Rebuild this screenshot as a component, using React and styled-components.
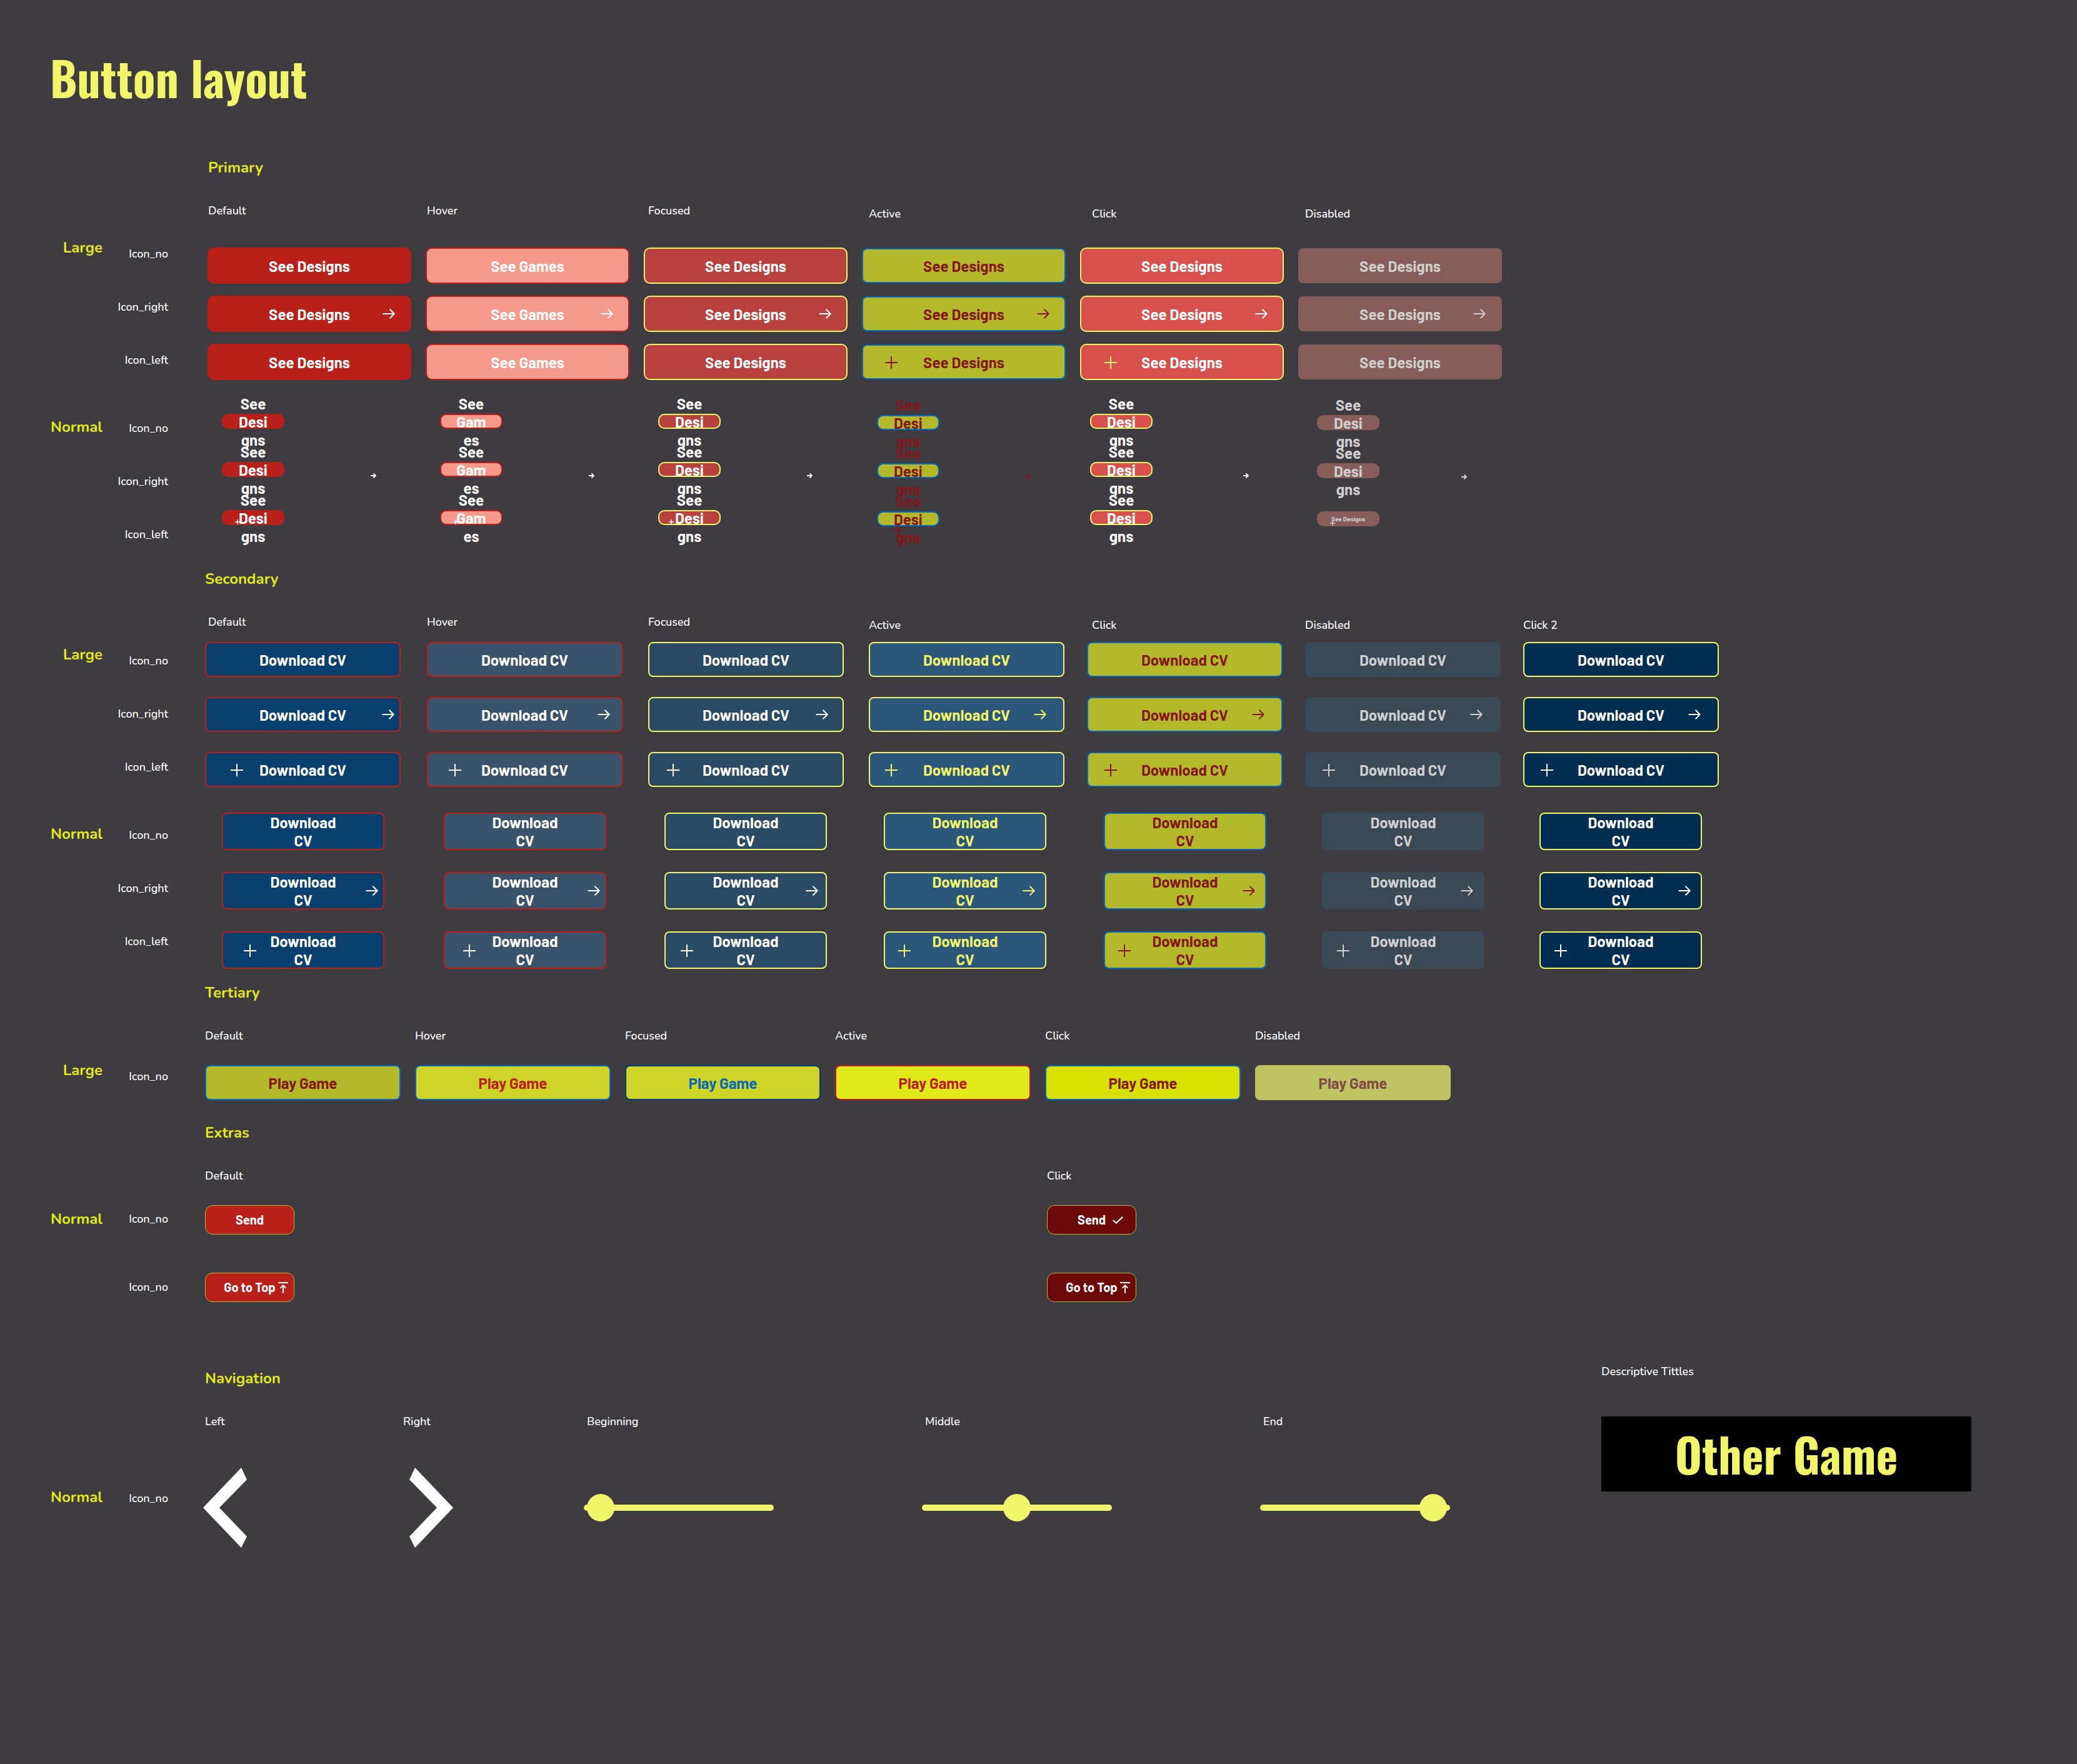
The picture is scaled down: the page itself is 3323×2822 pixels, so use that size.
import React from "react";
import styled, { createGlobalStyle } from "styled-components";

const DISPLAY = `"Oswald", "Liberation Sans Narrow", "Roboto Condensed", sans-serif`;
const LABEL = `"Nunito", "Open Sans", "Noto Sans", sans-serif`;
const ACTION = `"Barlow", Roboto, "Liberation Sans", sans-serif`;

const c = {
  page: "#3f3c41",
  lemon: "#f0f56a",
  lime: "#e2e91a",
  white: "#ffffff",
  red: "#b82019",
  wine: "#841818",
  blue: "#0668b7",
  olive: "#b4b92b",
  muted: "#cfcfcf",
};

const GlobalStyle = createGlobalStyle`
  *, *::before, *::after { box-sizing: border-box; }
  body { margin: 0; background: ${c.page}; }
  h1, h2, h3, p { margin: 0; font-weight: inherit; }
`;

/* ---------- page frame ---------- */

const Page = styled.main`
  min-height: 100vh;
  padding: 74px 0 160px;
  background: ${c.page};
  color: ${c.white};
  font-family: ${LABEL};
`;

const Title = styled.h1`
  padding-left: 80px;
  color: ${c.lemon};
  font: 700 74px/100px ${DISPLAY};
`;

const Section = styled.section`
  padding-top: ${(p) => p.$space}px;
`;

const SectionTitle = styled.h2`
  padding-left: ${(p) => p.$indent || 328}px;
  color: ${c.lime};
  font: 700 24px/32px ${LABEL};
`;

const ColumnLabels = styled.div`
  display: grid;
  grid-template-columns: ${(p) => p.$cols};
  align-items: start;
  margin: 41px 0 ${(p) => p.$after}px;
  padding-left: ${(p) => p.$indent || 328}px;
`;

const ColumnLabel = styled.label`
  padding-top: ${(p) => (p.$low ? 5 : 0)}px;
  font: 500 18px/24px ${LABEL};
`;

const Group = styled.div`
  display: grid;
  grid-template-columns: 164px 105px 1fr;
  align-items: start;
  margin-top: ${(p) => p.$space || 0}px;
`;

const GroupLabel = styled.h3`
  padding-top: ${(p) => p.$top}px;
  text-align: right;
  color: ${c.lime};
  font: 700 24px/32px ${LABEL};
`;

const RowLabels = styled.div`
  display: flex;
  flex-direction: column;
  gap: ${(p) => p.$gap || 61}px;
  padding-top: ${(p) => p.$top}px;
  text-align: right;
  font: 500 18px/24px ${LABEL};
`;

const Matrix = styled.div`
  display: grid;
  grid-template-columns: ${(p) => p.$cols};
  row-gap: ${(p) => p.$gap || 0}px;
  align-items: ${(p) => p.$align || "center"};
  padding: ${(p) => p.$top || 0}px 0 0 ${(p) => p.$indent || 59}px;
`;

const PillCell = styled.div`
  display: flex;
  align-items: flex-start;
  justify-content: space-between;
  width: 270px;
  padding: ${(p) => p.$drop || 0}px 0 0 ${(p) => p.$indent}px;
`;

/* ---------- buttons ---------- */

const sizes = {
  primary: { w: 326, h: 58, r: 10, f: 24 },
  pill: { w: 100, h: 24, r: 10, f: 24 },
  large: { w: 313, h: 56, r: 8, f: 24 },
  normal: { w: 260, h: 60, r: 8, f: 24 },
  extra: { w: 143, h: 47, r: 12, f: 20 },
};

const ActionButton = styled.button`
  position: relative;
  display: grid;
  grid-template-columns: 1fr auto 1fr;
  align-items: center;
  align-content: center;
  flex: none;
  width: ${(p) => sizes[p.$size].w}px;
  height: ${(p) => sizes[p.$size].h - (p.$slim ? 2 : 0)}px;
  padding: 0;
  border: ${(p) => (p.$size === "extra" ? 1 : 2)}px solid ${(p) => p.$tone.line || p.$tone.fill};
  border-radius: ${(p) => sizes[p.$size].r - (p.$slim ? 2 : 0)}px;
  background: ${(p) => p.$tone.fill};
  color: ${(p) => p.$tone.ink};
  font: 700 ${(p) => sizes[p.$size].f}px/29px ${ACTION};
`;

const Caption = styled.span`
  grid-column: 2;
  text-align: center;
  white-space: nowrap;
`;

const TinyCaption = styled(Caption)`
  font-size: 10px;
`;

const LeftSlot = styled.span`
  grid-area: 1 / 1;
  display: flex;
  padding: 2px 0 0 ${(p) => p.$inset - 2}px;
  color: ${(p) => p.$ink || "inherit"};
`;

const RightSlot = styled.span`
  grid-area: 1 / 3;
  justify-self: end;
  display: flex;
  padding-right: ${(p) => p.$inset - 2}px;
`;

const PinnedMark = styled.span`
  position: absolute;
  left: ${(p) => p.$x}px;
  top: ${(p) => p.$y}px;
  display: flex;
`;

const TrailingMark = styled.span`
  display: flex;
  flex: none;
  margin: 18px 0 -2px;
  color: ${(p) => p.$ink};
`;

/* ---------- icons ---------- */

const Arrow = () => (
  <svg width="20" height="16" viewBox="0 0 20 16" fill="none" stroke="currentColor" strokeWidth="2" aria-hidden="true">
    <path d="M0.5 8H18.5M11.6 0.8L18.7 8L11.6 15.2" />
  </svg>
);

const TinyArrow = () => (
  <svg width="9" height="8" viewBox="0 0 9 8" fill="none" stroke="currentColor" strokeWidth="2" aria-hidden="true">
    <path d="M0 4H7.6M4.4 0.6L7.8 4L4.4 7.4" />
  </svg>
);

const Plus = ({ size = 20 }) => (
  <svg width={size} height={size} viewBox={`0 0 ${size} ${size}`} stroke="currentColor" strokeWidth={size > 10 ? 2 : 1.5} aria-hidden="true">
    <path d={`M0 ${size / 2}H${size}M${size / 2} 0V${size}`} />
  </svg>
);

const Check = () => (
  <svg width="17" height="12" viewBox="0 0 17 12" fill="none" stroke="currentColor" strokeWidth="2" aria-hidden="true">
    <path d="M0.8 6L5.8 10.6L16.2 0.8" />
  </svg>
);

const ToTop = () => (
  <svg width="16" height="18" viewBox="0 0 16 18" fill="none" stroke="currentColor" strokeWidth="2" aria-hidden="true">
    <path d="M0 1H16M8 18V5.4M3.6 9.6L8 5.2L12.4 9.6" />
  </svg>
);

/* ---------- navigation ---------- */

const ArrowButton = styled.button`
  display: flex;
  justify-self: start;
  padding: 0;
  border: 0;
  background: none;
  color: ${c.white};
`;

const Chevron = ({ flip }) => (
  <svg width="70" height="128" viewBox="0 0 70 128" fill="currentColor" aria-hidden="true">
    <path d={flip ? "M9 0L70 64L9 128L0 110L44 64L0 19Z" : "M61 0L0 64L61 128L70 110L26 64L70 19Z"} />
  </svg>
);

const Slider = styled.input`
  appearance: none;
  width: 304px;
  height: 44px;
  margin: 0;
  background: none;

  &::-webkit-slider-runnable-track {
    height: 10px;
    border-radius: 5px;
    background: ${c.lemon};
  }

  &::-webkit-slider-thumb {
    appearance: none;
    width: 44px;
    height: 44px;
    margin-top: -17px;
    border-radius: 50%;
    background: ${c.lemon};
  }
`;

const BottomRow = styled.div`
  display: flex;
  justify-content: space-between;
  align-items: flex-start;
  margin-top: 99px;
  padding-right: 169px;
`;

const TitleSample = styled.aside`
  flex: none;
  width: 592px;
`;

const SampleLabel = styled.p`
  font: 500 18px/24px ${LABEL};
`;

const SampleBox = styled.p`
  margin-top: 60px;
  padding: 10px 0;
  background: #000;
  text-align: center;
  color: ${c.lemon};
  font: 700 74px/100px ${DISPLAY};
`;

/* ---------- data ---------- */

const primary = [
  { tone: { fill: c.red, ink: c.white }, word: "Designs", indent: 23, pinned: 19 },
  { tone: { fill: "#f5998b", line: c.red, ink: c.white }, word: "Games", indent: 23, pinned: 19 },
  { tone: { fill: "#b8413d", line: c.lemon, ink: c.white }, word: "Designs", indent: 23, pinned: 15 },
  { tone: { fill: c.olive, line: c.blue, ink: c.wine }, word: "Designs", slim: true, plus: 37, indent: 24, drop: 2, pinned: 22, big: true },
  { tone: { fill: "#d7504b", line: c.lemon, ink: c.white }, word: "Designs", plus: 39, plusInk: c.lemon, indent: 16, pinned: 31 },
  { tone: { fill: "#865d59", ink: c.muted }, word: "Designs", slim: true, indent: 30, drop: 2, pinned: 19, disabled: true, tiny: true },
];

const secondary = [
  { tone: { fill: "#0a406d", line: c.red, ink: c.white }, right: 10, left: 41, nRight: 10, nLeft: 35 },
  { tone: { fill: "#39536a", line: c.red, ink: c.white }, right: 20, left: 35, nRight: 10, nLeft: 31 },
  { tone: { fill: "#2b4a63", line: c.lemon, ink: c.white }, right: 25, left: 30, nRight: 14, nLeft: 26 },
  { tone: { fill: "#2b577a", line: c.lemon, ink: c.lemon }, right: 29, left: 26, nRight: 18, nLeft: 23 },
  { tone: { fill: c.olive, line: c.blue, ink: c.wine }, right: 29, left: 28, nRight: 18, nLeft: 23 },
  { tone: { fill: "#3a4956", ink: c.muted }, right: 29, left: 28, nRight: 18, nLeft: 24, disabled: true },
  { tone: { fill: "#002d50", line: c.lemon, ink: c.white }, right: 29, left: 28, nRight: 18, nLeft: 24 },
];

const tertiary = [
  { fill: c.olive, line: c.blue, ink: c.wine },
  { fill: "#cdd427", line: c.blue, ink: c.red },
  { fill: "#cdd427", line: "#003f71", ink: c.blue },
  { fill: c.lime, line: c.red, ink: c.red },
  { fill: "#d9e100", line: c.blue, ink: c.wine },
  { fill: "#bfc463", ink: "#7f4b47" },
];

const extras = [
  { fill: c.red, line: c.olive, ink: c.white },
  { fill: "#6d0909", line: c.olive, ink: c.white },
];

const states = ["Default", "Hover", "Focused", "Active", "Click", "Disabled", "Click 2"];
const rows = ["no", "right", "left"];

const STATE_COLS = "350px 354px 353px 357px 341px 349px auto";
const PRIMARY_COLS = "repeat(6, 349px)";
const SECONDARY_COLS = "355px 354px 353px 349px 349px 349px 349px";
const SECONDARY_NORMAL_COLS = "355px 353px 351px 352px 349px 348px 349px";
const TERTIARY_COLS = "repeat(6, 336px)";
const EXTRA_COLS = "1347px auto";

/* ---------- sections ---------- */

const IconRows = ({ top }) => (
  <RowLabels $top={top}>
    {rows.map((r) => (
      <p key={r}>Icon_{r}</p>
    ))}
  </RowLabels>
);

const StateLabels = ({ count, after }) => (
  <ColumnLabels $cols={STATE_COLS} $indent={333} $after={after}>
    {states.slice(0, count).map((s, i) => (
      <ColumnLabel as="p" key={s} $low={i > 2}>
        {s}
      </ColumnLabel>
    ))}
  </ColumnLabels>
);

const PrimaryPill = ({ item, row }) => {
  const [head, tail] = item.word === "Games" ? ["Gam", "es"] : ["Desi", "gns"];
  const tiny = item.tiny && row === "left";
  return (
    <PillCell $indent={item.indent} $drop={item.drop}>
      <ActionButton $size="pill" $tone={item.tone} disabled={item.disabled}>
        {tiny ? (
          <TinyCaption>See {item.word}</TinyCaption>
        ) : (
          <Caption>
            See
            <br />
            {head}
            <br />
            {tail}
          </Caption>
        )}
        {row === "left" && (
          <PinnedMark $x={item.pinned} $y={item.big ? 18 : 13}>
            <Plus size={item.big ? 20 : 8} />
          </PinnedMark>
        )}
      </ActionButton>
      {row === "right" && (
        <TrailingMark $ink={item.tone.ink}>
          <TinyArrow />
        </TrailingMark>
      )}
    </PillCell>
  );
};

const DownloadButton = ({ item, row, size }) => {
  const small = size === "normal";
  return (
    <ActionButton $size={size} $tone={item.tone} disabled={item.disabled}>
      {row === "left" && (
        <LeftSlot $inset={small ? item.nLeft : item.left}>
          <Plus />
        </LeftSlot>
      )}
      <Caption>
        Download{small ? <br /> : " "}CV
      </Caption>
      {row === "right" && (
        <RightSlot $inset={small ? item.nRight : item.right}>
          <Arrow />
        </RightSlot>
      )}
    </ActionButton>
  );
};

export default function App() {
  return (
    <Page>
      <GlobalStyle />
      <Title>Button layout</Title>

      <Section $space={78}>
        <SectionTitle $indent={333}>Primary</SectionTitle>
        <StateLabels count={6} after={25} />
        <Group>
          <GroupLabel $top={1}>Large</GroupLabel>
          <IconRows top={15} />
          <Matrix $cols={PRIMARY_COLS} $gap={19} $top={17} $indent={63}>
            {rows.map((row) =>
              primary.map((item, i) => (
                <ActionButton key={row + i} $size="primary" $slim={item.slim} $tone={item.tone} disabled={item.disabled}>
                  {row === "left" && item.plus && (
                    <LeftSlot $inset={item.plus} $ink={item.plusInk}>
                      <Plus />
                    </LeftSlot>
                  )}
                  <Caption>See {item.word}</Caption>
                  {row === "right" && (
                    <RightSlot $inset={26}>
                      <Arrow />
                    </RightSlot>
                  )}
                </ActionButton>
              ))
            )}
          </Matrix>
        </Group>
        <Group $space={54}>
          <GroupLabel $top={5}>Normal</GroupLabel>
          <IconRows top={11} />
          <Matrix $cols={PRIMARY_COLS} $gap={51} $indent={63} $align="start">
            {rows.map((row) => primary.map((item, i) => <PrimaryPill key={row + i} item={item} row={row} />))}
          </Matrix>
        </Group>
      </Section>

      <Section $space={43}>
        <SectionTitle>Secondary</SectionTitle>
        <StateLabels count={7} after={15} />
        <Group>
          <GroupLabel $top={4}>Large</GroupLabel>
          <IconRows top={18} />
          <Matrix $cols={SECONDARY_COLS} $gap={32}>
            {rows.map((row) =>
              secondary.map((item, i) => <DownloadButton key={row + i} item={item} row={row} size="large" />)
            )}
          </Matrix>
        </Group>
        <Group $space={41}>
          <GroupLabel $top={18}>Normal</GroupLabel>
          <IconRows top={24} />
          <Matrix $cols={SECONDARY_NORMAL_COLS} $gap={35} $indent={86}>
            {rows.map((row) =>
              secondary.map((item, i) => <DownloadButton key={row + i} item={item} row={row} size="normal" />)
            )}
          </Matrix>
        </Group>
      </Section>

      <Section $space={22}>
        <SectionTitle>Tertiary</SectionTitle>
        <ColumnLabels $cols={TERTIARY_COLS} $after={26}>
          {states.slice(0, 6).map((s) => (
            <ColumnLabel as="p" key={s}>
              {s}
            </ColumnLabel>
          ))}
        </ColumnLabels>
        <Group>
          <GroupLabel $top={1}>Large</GroupLabel>
          <RowLabels $top={15}>
            <p>Icon_no</p>
          </RowLabels>
          <Matrix $cols={TERTIARY_COLS} $top={9}>
            {tertiary.map((tone, i) => (
              <ActionButton key={i} $size="large" $tone={tone} disabled={i === 5}>
                <Caption>Play Game</Caption>
              </ActionButton>
            ))}
          </Matrix>
        </Group>
      </Section>

      <Section $space={36}>
        <SectionTitle>Extras</SectionTitle>
        <ColumnLabels $cols={EXTRA_COLS} $after={35}>
          <ColumnLabel as="p">Default</ColumnLabel>
          <ColumnLabel as="p">Click</ColumnLabel>
        </ColumnLabels>
        <Group>
          <GroupLabel $top={6}>Normal</GroupLabel>
          <RowLabels $top={10} $gap={85}>
            <p>Icon_no</p>
            <p>Icon_no</p>
          </RowLabels>
          <Matrix $cols={EXTRA_COLS} $gap={61}>
            {extras.map((tone, i) => (
              <ActionButton key={i} $size="extra" $tone={tone}>
                <Caption>Send</Caption>
                {i === 1 && (
                  <RightSlot $inset={22}>
                    <Check />
                  </RightSlot>
                )}
              </ActionButton>
            ))}
            {extras.map((tone, i) => (
              <ActionButton key={i} $size="extra" $tone={tone}>
                <Caption>Go to Top</Caption>
                <RightSlot $inset={11}>
                  <ToTop />
                </RightSlot>
              </ActionButton>
            ))}
          </Matrix>
        </Group>
      </Section>

      <BottomRow>
        <Section $space={7}>
          <SectionTitle>Navigation</SectionTitle>
          <ColumnLabels $cols="317px 294px 541px 541px auto" $after={62}>
            <ColumnLabel htmlFor="nav-left">Left</ColumnLabel>
            <ColumnLabel htmlFor="nav-right">Right</ColumnLabel>
            <ColumnLabel htmlFor="nav-beginning">Beginning</ColumnLabel>
            <ColumnLabel htmlFor="nav-middle">Middle</ColumnLabel>
            <ColumnLabel htmlFor="nav-end">End</ColumnLabel>
          </ColumnLabels>
          <Group>
            <GroupLabel $top={31}>Normal</GroupLabel>
            <RowLabels $top={37}>
              <p>Icon_no</p>
            </RowLabels>
            <Matrix $cols="330px 279px 541px 541px 304px" $indent={56}>
              <ArrowButton id="nav-left">
                <Chevron />
              </ArrowButton>
              <ArrowButton id="nav-right">
                <Chevron flip />
              </ArrowButton>
              <Slider id="nav-beginning" type="range" defaultValue={2} />
              <Slider id="nav-middle" type="range" defaultValue={50} />
              <Slider id="nav-end" type="range" defaultValue={98} />
            </Matrix>
          </Group>
        </Section>
        <TitleSample>
          <SampleLabel>Descriptive Tittles</SampleLabel>
          <SampleBox>Other Game</SampleBox>
        </TitleSample>
      </BottomRow>
    </Page>
  );
}
